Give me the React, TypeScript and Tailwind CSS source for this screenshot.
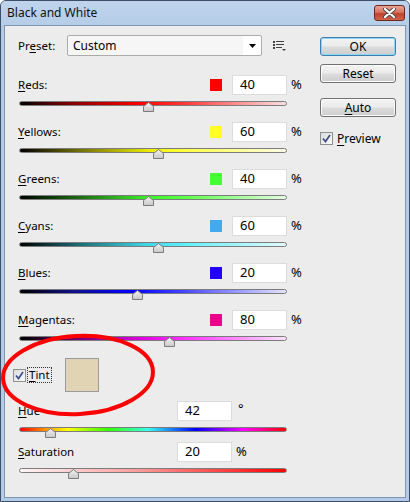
import React from "react";

type Channel = {
  name: string;
  key: string;
  rest: string;
  value: number;
  swatch: string;
  track: string;
};

const channels: Channel[] = [
  { name: "Reds", key: "R", rest: "eds:", value: 40, swatch: "bg-[#ff0000]", track: "bg-[linear-gradient(to_right,#000_0%,#8a0000_20%,#ff0000_45%,#ff3030_60%,#fbe0e0_100%)]" },
  { name: "Yellows", key: "Y", rest: "ellows:", value: 60, swatch: "bg-[#ffff22]", track: "bg-[linear-gradient(to_right,#000_0%,#6f6f00_22%,#f2f200_50%,#ffff40_62%,#fcfce6_100%)]" },
  { name: "Greens", key: "G", rest: "reens:", value: 40, swatch: "bg-[#44ff33]", track: "bg-[linear-gradient(to_right,#000_0%,#1a6a10_22%,#3cf02a_48%,#5cff4a_62%,#e4fce2_100%)]" },
  { name: "Cyans", key: "C", rest: "yans:", value: 60, swatch: "bg-[#44aaee]", track: "bg-[linear-gradient(to_right,#000_0%,#1a6a70_22%,#40d8e8_48%,#60f0ff_62%,#e2fafc_100%)]" },
  { name: "Blues", key: "B", rest: "lues:", value: 20, swatch: "bg-[#2200ff]", track: "bg-[linear-gradient(to_right,#000_0%,#10108a_20%,#0000ff_42%,#4040ff_60%,#e4e4fc_100%)]" },
  { name: "Magentas", key: "M", rest: "agentas:", value: 80, swatch: "bg-[#ee0088]", track: "bg-[linear-gradient(to_right,#000_0%,#6a006a_20%,#e000e0_45%,#ff30ff_62%,#fbe2fb_100%)]" },
];

function Thumb({ pos }: { pos: number }) {
  return (
    <svg
      width="11"
      height="10"
      viewBox="0 0 11 10"
      className="absolute top-[1px]"
      style={{ left: pos - 5 }}
    >
      <defs>
        <linearGradient id="thumbg" x1="0" y1="0" x2="0" y2="1">
          <stop offset="0" stopColor="#f2f2f2" />
          <stop offset="1" stopColor="#c8c8c8" />
        </linearGradient>
      </defs>
      <polygon points="5.5,0.5 10.5,4.5 10.5,9.5 0.5,9.5 0.5,4.5" fill="url(#thumbg)" stroke="#7b7b7b" />
    </svg>
  );
}

function Track({ gradient, fraction }: { gradient: string; fraction: number }) {
  return (
    <div className="relative ml-[1px] w-[268px] h-[5px]">
      <div className={`h-[5px] w-full rounded-full border border-[#7c7c7c] ${gradient}`}></div>
      <Thumb pos={Math.round(fraction * 268)} />
    </div>
  );
}

function Checkbox() {
  return (
    <div className="w-[13px] h-[13px] border border-[#8e8f8f] bg-[linear-gradient(to_bottom_right,#dcdcdc,#fafafa)] flex items-center justify-center shrink-0">
      <svg width="9" height="9" viewBox="0 0 9 9">
        <path d="M1 4.5 L3.5 7.5 L8 1" fill="none" stroke="#3c4f8a" strokeWidth="1.7" />
      </svg>
    </div>
  );
}

function NumBox({ value }: { value: number }) {
  return (
    <div className="w-[55px] h-[20px] shrink-0 bg-white border border-[#dcdcdc] flex items-center pl-[7px] text-[13px]">
      {value}
    </div>
  );
}

function Button({ children, primary }: { children: React.ReactNode; primary?: boolean }) {
  return (
    <div
      className={`w-[76px] h-[19px] rounded-[3px] border flex items-center justify-center text-[12px] bg-[linear-gradient(to_bottom,#f3f3f3_0%,#ebebeb_48%,#dcdcdc_52%,#cdcdcd_100%)] ${
        primary ? "border-[#3c7fb1] shadow-[inset_0_0_0_1px_#8fd6f6]" : "border-[#707070] shadow-[inset_0_0_0_1px_#fcfcfc]"
      }`}
    >
      {children}
    </div>
  );
}

export default function App() {
  return (
    <div className="relative w-[410px] h-[502px] overflow-hidden rounded-t-[6px] border border-[#3d4f66] bg-[#b3cbe6] flex flex-col font-['Noto_Sans',sans-serif] text-[11.5px] text-black">
      {/* title bar */}
      <div className="h-[24px] shrink-0 flex items-center justify-between pl-[6px] pr-[4px] bg-[linear-gradient(to_bottom,#bfd4ec,#b6cde8)]">
        <span className="text-[12px] text-[#111]">Black and White</span>
        <div className="w-[31px] h-[16px] rounded-[3px] border border-[#6b2a20] bg-[linear-gradient(to_bottom,#e9a597_0%,#d8705e_45%,#c2422d_55%,#d1624c_100%)] flex items-center justify-center">
          <svg width="13" height="10" viewBox="0 0 13 10">
            <path d="M2 1 L11 9 M11 1 L2 9" stroke="#4a4a4a" strokeWidth="4" strokeLinecap="round" />
            <path d="M2 1 L11 9 M11 1 L2 9" stroke="#ffffff" strokeWidth="2.2" strokeLinecap="round" />
          </svg>
        </div>
      </div>

      {/* body */}
      <div className="mx-[3px] mb-[3px] flex-1 bg-[#ececec] border border-[#7f95b1] flex">
        <div className="w-[300px] shrink-0 pl-[13px] pt-[9px]">
          <div className="flex items-center h-[21px]">
            <span className="w-[49px] shrink-0">
              Pr<u className="underline-offset-[2px]">e</u>set:
            </span>
            <div className="w-[195px] shrink-0 h-[21px] border border-[#acacac] rounded-[2px] bg-[#f6f6f6] flex items-center">
              <span className="flex-1 pl-[5px] text-[12px]">Custom</span>
              <div className="w-[18px] h-full bg-white flex items-center justify-center rounded-r-[2px]">
                <svg width="7" height="4" viewBox="0 0 7 4">
                  <polygon points="0,0 7,0 3.5,4" fill="#000" />
                </svg>
              </div>
            </div>
            <svg width="14" height="12" viewBox="0 0 14 12" className="ml-[11px]">
              <g fill="#404040">
                <rect x="0" y="1" width="2" height="2" />
                <rect x="0" y="4" width="2" height="2" />
                <rect x="0" y="7" width="2" height="2" />
                <rect x="3" y="1" width="8" height="1" />
                <rect x="3" y="4" width="8" height="1" />
                <rect x="3" y="7" width="6" height="1" />
                <polygon points="9,9 13,9 11,11" />
              </g>
            </svg>
          </div>

          <div className="mt-[19px] flex flex-col gap-[16px]">
            {channels.map((c) => (
              <div key={c.name}>
                <div className="flex items-center h-[20px]">
                  <span className="w-[192px] shrink-0">
                    <u className="underline-offset-[2px]">{c.key}</u>
                    {c.rest}
                  </span>
                  <div className={`w-[12px] h-[12px] shrink-0 ${c.swatch}`}></div>
                  <div className="ml-[10px]">
                    <NumBox value={c.value} />
                  </div>
                  <span className="ml-[4px] text-[13px]">%</span>
                </div>
                <div className="mt-[6px]">
                  <Track gradient={c.track} fraction={(c.value + 200) / 500} />
                </div>
              </div>
            ))}
          </div>

          {/* tint */}
          <div className="mt-[17px] -ml-[5px] flex items-center">
            <Checkbox />
            <span className="ml-[2px] px-[1px] outline outline-1 outline-dotted outline-[#333] leading-[14px]">
              <u className="underline-offset-[2px]">T</u>int
            </span>
            <div className="ml-[14px] w-[34px] h-[34px] bg-[#e0d4b4] border border-[#9a9a9a]"></div>
          </div>

          {/* hue */}
          <div className="mt-[9px] flex items-center h-[20px]">
            <span className="w-[159px] shrink-0">
              <u className="underline-offset-[2px]">H</u>ue
            </span>
            <NumBox value={42} />
            <span className="ml-[6px] self-start -mt-[2px] text-[13px]">°</span>
          </div>
          <div className="mt-[6px]">
            <Track
              gradient="bg-[linear-gradient(to_right,#ff0000_0%,#ff9900_10%,#ffff00_18%,#33ff00_33%,#33ffee_48%,#0000ff_66%,#ff00ff_84%,#ff0000_100%)]"
              fraction={42 / 359}
            />
          </div>

          {/* saturation */}
          <div className="mt-[10px] flex items-center h-[20px]">
            <span className="w-[159px] shrink-0">
              <u className="underline-offset-[2px]">S</u>aturation
            </span>
            <NumBox value={20} />
            <span className="ml-[4px] text-[13px]">%</span>
          </div>
          <div className="mt-[6px]">
            <Track gradient="bg-[linear-gradient(to_right,#fff6f6_0%,#ff9a9a_45%,#ff0000_100%)]" fraction={0.2} />
          </div>
        </div>

        {/* buttons */}
        <div className="ml-[15px] pt-[11px] flex flex-col">
          <Button primary>OK</Button>
          <div className="mt-[8px]">
            <Button>Reset</Button>
          </div>
          <div className="mt-[15px]">
            <Button>
              <u className="underline-offset-[2px]">A</u>uto
            </Button>
          </div>
          <div className="mt-[15px] flex items-center h-[13px]">
            <Checkbox />
            <span className="ml-[4px] text-[12px]">
              <u className="underline-offset-[2px]">P</u>review
            </span>
          </div>
        </div>
      </div>

      {/* red annotation ellipse */}
      <svg className="absolute left-0 top-[328px] pointer-events-none" width="160" height="96" viewBox="0 0 160 96">
        <ellipse cx="77" cy="46" rx="75" ry="39" fill="none" stroke="#ff0000" strokeWidth="4" transform="rotate(-3 77 46)" />
      </svg>
    </div>
  );
}
